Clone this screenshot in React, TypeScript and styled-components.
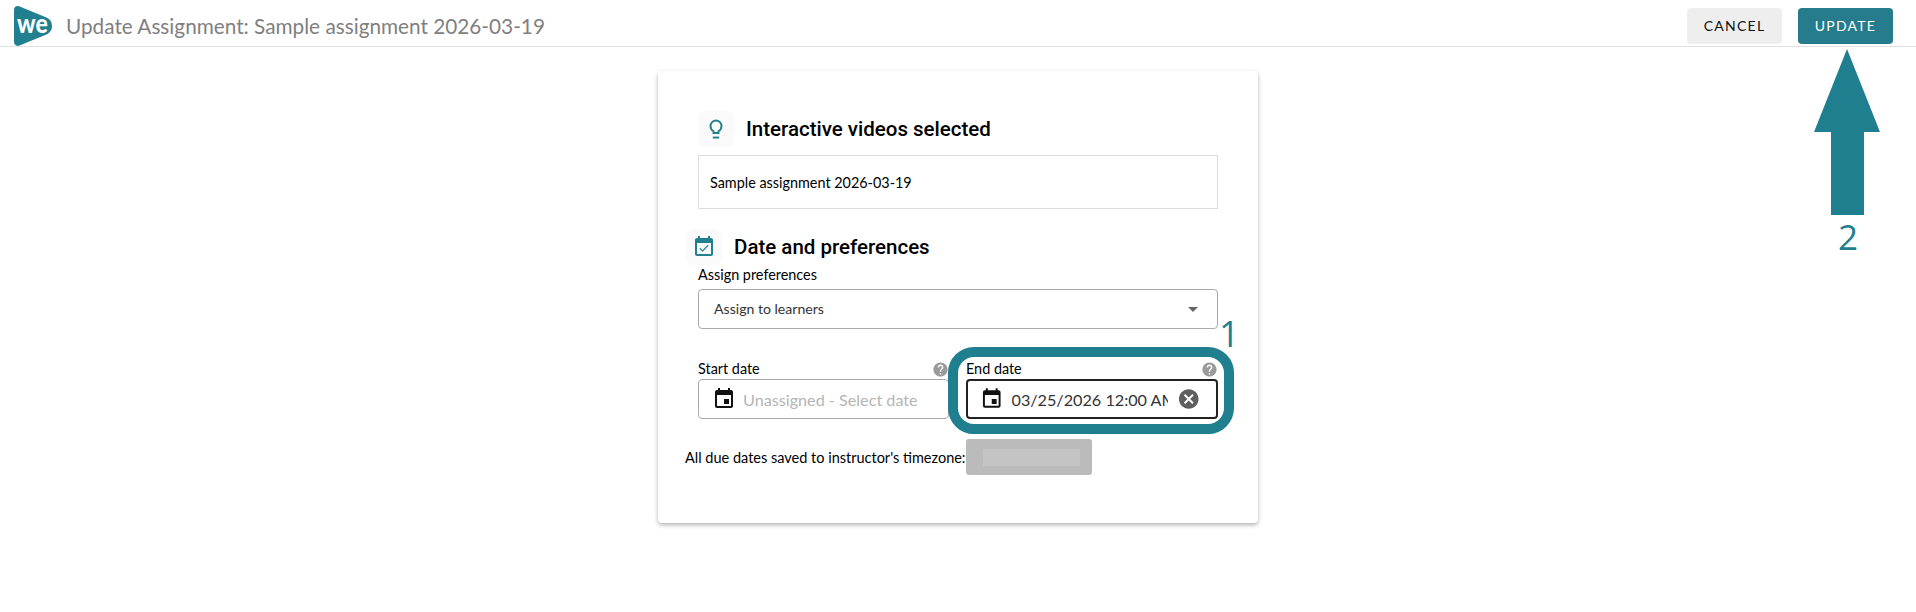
import styled, { createGlobalStyle } from "styled-components";
import { MdEvent, MdHelp, MdCancel, MdArrowDropDown } from "react-icons/md";

const GlobalStyle = createGlobalStyle`
  html, body {
    margin: 0;
    padding: 0;
    background: #fff;
    font-family: "Lato", "Liberation Sans", sans-serif;
    color: #000;
  }
`;

function Logo() {
  return (
    <LogoSvg viewBox="0 0 40 40">
      <path
        d="M5 0.3 L32.5 11.6 C36.2 13.1 38 16.2 38 20 C38 23.8 36.2 27 32.5 28.6 L5.5 39.6 C2.5 40.6 0 38.8 0 35.8 L0 4 C0 1.2 2.4 -0.6 5 0.3 Z"
        fill="#20808f"
      />
      <WeText transform="translate(3 26.5) scale(1 1.15)">we</WeText>
    </LogoSvg>
  );
}

function BulbIcon() {
  return (
    <svg viewBox="0 0 24 24" width="24" height="24">
      <path
        d="M9.5 16h5v-1.8c1.8-1 3-2.9 3-5.2a5.5 5.5 0 1 0-11 0c0 2.3 1.2 4.2 3 5.2z"
        fill="none"
        stroke="#20808f"
        strokeWidth="1.9"
      />
      <path d="M8.8 19.6h6.4v1.9H8.8z" fill="#20808f" />
    </svg>
  );
}

function EventCheckIcon() {
  return (
    <svg viewBox="0 0 24 24" width="24" height="24">
      <path
        d="M19 3h-1V1h-2v2H8V1H6v2H5c-1.1 0-2 .9-2 2v14c0 1.1.9 2 2 2h14c1.1 0 2-.9 2-2V5c0-1.1-.9-2-2-2zm0 16H5V8h14v11z"
        fill="#20808f"
      />
      <path d="M10.5 17 L7.3 13.8 l1 -1 2.2 2.2 5.2-5.2 1 1z" fill="#3d8b99" />
    </svg>
  );
}

export default function App() {
  return (
    <Page>
      <GlobalStyle />
      <Header>
        <TitleGroup>
          <Logo />
          <Title>Update Assignment: Sample assignment 2026-03-19</Title>
        </TitleGroup>
        <Actions>
          <CancelButton>CANCEL</CancelButton>
          <UpdateButton>UPDATE</UpdateButton>
        </Actions>
      </Header>

      <Main>
        <Card>
          <SectionHeader>
            <IconBox>
              <BulbIcon />
            </IconBox>
            <Heading>Interactive videos selected</Heading>
          </SectionHeader>
          <SelectedBox>Sample assignment 2026-03-19</SelectedBox>

          <SectionHeader $outdent>
            <IconBox>
              <EventCheckIcon />
            </IconBox>
            <Heading>Date and preferences</Heading>
          </SectionHeader>
          <FieldLabel>Assign preferences</FieldLabel>
          <SelectBox>
            <SelectText>Assign to learners</SelectText>
            <MdArrowDropDown size={24} color="#666" />
          </SelectBox>

          <DateRow>
            <DateField>
              <LabelRow>
                <FieldLabel>Start date</FieldLabel>
                <MdHelp size={17} color="#9a9a9a" />
              </LabelRow>
              <DateInput>
                <MdEvent size={24} color="#111" />
                <Placeholder>Unassigned - Select date</Placeholder>
              </DateInput>
            </DateField>
            <DateField>
              <LabelRow>
                <FieldLabel>End date</FieldLabel>
                <MdHelp size={17} color="#9a9a9a" />
              </LabelRow>
              <DateInput $active>
                <MdEvent size={24} color="#111" />
                <DateValue>03/25/2026 12:00 AM</DateValue>
                <MdCancel size={24} color="#5f5f5f" />
              </DateInput>
            </DateField>
            <Highlight />
            <StepOne>1</StepOne>
          </DateRow>

          <TimezoneRow>
            All due dates saved to instructor's timezone:
            <Redacted>
              <RedactedInner />
            </Redacted>
          </TimezoneRow>
        </Card>
      </Main>

      <ArrowSvg viewBox="0 0 66 166">
        <path d="M33 0 L66 83 L50 83 L50 166 L17 166 L17 83 L0 83 Z" fill="#1f7f8f" />
      </ArrowSvg>
      <StepTwo>2</StepTwo>
    </Page>
  );
}

const Page = styled.div`
  position: relative;
  width: 1916px;
  height: 612px;
  overflow: hidden;
`;

const Header = styled.header`
  height: 47px;
  box-sizing: border-box;
  border-bottom: 1px solid #e0e0e0;
  display: flex;
  align-items: center;
  justify-content: space-between;
  padding: 6px 23px 0 14px;
`;

const TitleGroup = styled.div`
  display: flex;
  align-items: center;
  gap: 12px;
`;

const LogoSvg = styled.svg`
  width: 40px;
  height: 40px;
  flex: none;
`;

const WeText = styled.text`
  font-family: "Lato", sans-serif;
  font-weight: 900;
  font-size: 23px;
  fill: #fff;
`;

const Title = styled.h1`
  margin: 0;
  font-size: 20.75px;
  font-weight: 400;
  color: #7f7f7f;
`;

const Actions = styled.div`
  display: flex;
  gap: 16px;
`;

const CancelButton = styled.button`
  width: 95px;
  height: 36px;
  border: none;
  border-radius: 4px;
  padding: 0 0 2px;
  background: #eeeeee;
  color: #111;
  font-family: "Lato", sans-serif;
  font-size: 14px;
  letter-spacing: 1.25px;
`;

const UpdateButton = styled(CancelButton)`
  background: #267c8c;
  color: #fff;
`;

const Main = styled.main`
  display: flex;
  justify-content: center;
  padding-top: 24px;
`;

const Card = styled.section`
  width: 600px;
  box-sizing: border-box;
  padding: 40px 40px 48px;
  background: #fff;
  border-radius: 4px;
  box-shadow: 0 2px 4px rgba(0, 0, 0, 0.3);
`;

const SectionHeader = styled.div<{ $outdent?: boolean }>`
  display: flex;
  align-items: center;
  gap: 12px;
  margin-left: ${(p) => (p.$outdent ? "-12px" : "0")};
  margin-bottom: ${(p) => (p.$outdent ? "0" : "8px")};
`;

const IconBox = styled.div`
  width: 36px;
  height: 36px;
  border-radius: 8px;
  background: #fafafa;
  display: flex;
  align-items: center;
  justify-content: center;
`;

const Heading = styled.h2`
  margin: 0;
  font-family: "Roboto", sans-serif;
  font-size: 20.5px;
  font-weight: 500;
`;

const SelectedBox = styled.div`
  height: 54px;
  box-sizing: border-box;
  border: 1px solid #dddddd;
  padding: 0 11px;
  margin-bottom: 20px;
  display: flex;
  align-items: center;
  font-size: 14.4px;
`;

const FieldLabel = styled.div`
  font-size: 14.4px;
  line-height: 20px;
`;

const SelectBox = styled.div`
  height: 40px;
  box-sizing: border-box;
  margin-top: 4px;
  border: 1px solid #aaaaaa;
  border-radius: 4px;
  padding: 0 12px 0 15px;
  display: flex;
  align-items: center;
  justify-content: space-between;
`;

const SelectText = styled.span`
  font-size: 14.1px;
  color: #333;
  margin-bottom: 2px;
`;

const DateRow = styled.div`
  position: relative;
  margin-top: 30px;
  display: grid;
  grid-template-columns: 251px 252px;
  column-gap: 17px;
`;

const DateField = styled.div`
  display: flex;
  flex-direction: column;
`;

const LabelRow = styled.div`
  display: flex;
  align-items: center;
  justify-content: space-between;
`;

const DateInput = styled.div<{ $active?: boolean }>`
  height: 40px;
  box-sizing: border-box;
  border: ${(p) => (p.$active ? "2px solid #222" : "1px solid #aaaaaa")};
  border-radius: 4px;
  padding: 0 ${(p) => (p.$active ? "16px" : "12px")} 0 ${(p) => (p.$active ? "12px" : "13px")};
  display: flex;
  align-items: center;
  gap: ${(p) => (p.$active ? "8px" : "7px")};
  font-size: 16.2px;
`;

const Placeholder = styled.span`
  color: #b5b5b5;
  white-space: nowrap;
`;

const DateValue = styled.span`
  width: 156px;
  margin-right: 1px;
  flex: none;
  overflow: hidden;
  white-space: nowrap;
  color: #333;
`;

const Highlight = styled.div`
  position: absolute;
  left: 250px;
  top: -12px;
  width: 286px;
  height: 87px;
  box-sizing: border-box;
  border: 10px solid #1f7f8f;
  border-radius: 26px;
  pointer-events: none;
`;

const StepOne = styled.div`
  position: absolute;
  left: 521px;
  top: -45px;
  font-family: "Open Sans", sans-serif;
  font-size: 36px;
  line-height: 40px;
  color: #1f7f8f;
`;

const TimezoneRow = styled.div`
  margin: 20px 0 0 -13px;
  display: flex;
  align-items: center;
  font-size: 14.5px;
  white-space: nowrap;
`;

const Redacted = styled.div`
  width: 126px;
  height: 36px;
  border-radius: 3px;
  background: #bbbbbb;
  display: flex;
  align-items: center;
  justify-content: flex-end;
  padding-right: 12px;
  box-sizing: border-box;
`;

const RedactedInner = styled.div`
  width: 97px;
  height: 17px;
  background: #c4c4c4;
`;

const ArrowSvg = styled.svg`
  position: absolute;
  left: 1814px;
  top: 49px;
  width: 66px;
  height: 166px;
`;

const StepTwo = styled.div`
  position: absolute;
  left: 1826px;
  top: 217px;
  width: 44px;
  text-align: center;
  font-family: "Open Sans", sans-serif;
  font-size: 35px;
  line-height: 40px;
  color: #1f7f8f;
`;
